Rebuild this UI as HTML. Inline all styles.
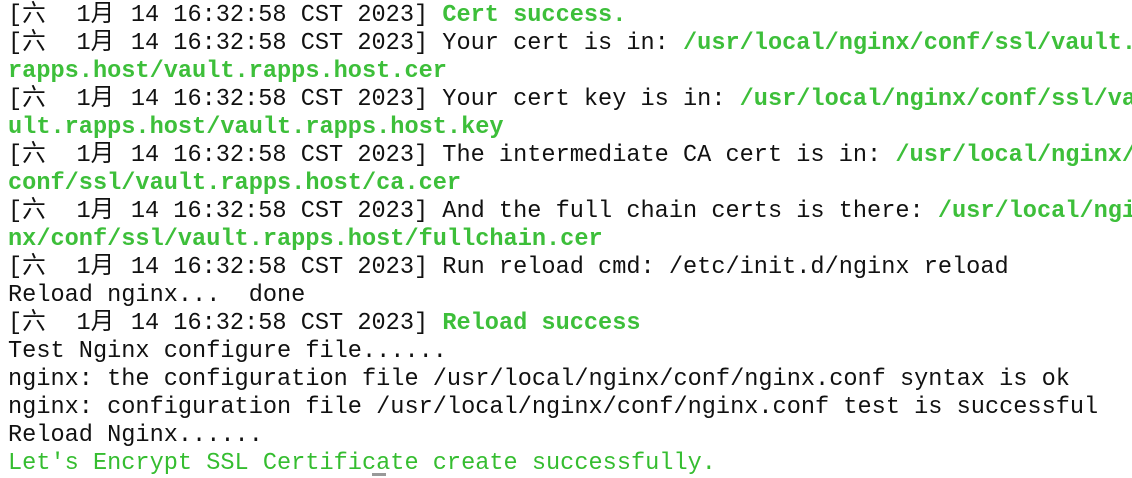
<!DOCTYPE html>
<html><head><meta charset="utf-8"><style>
html,body{margin:0;padding:0;background:#fff;width:1132px;height:478px;overflow:hidden}
.t{position:absolute;left:8px;top:2px;font-family:"Liberation Mono","Noto Sans CJK SC",monospace;font-size:23.6px;line-height:28px;color:#111;width:1200px}
.l{height:28px;white-space:pre}
.c{display:inline-block;width:26px;text-align:left}
.g{color:#3dbf3a;font-weight:bold}
.h{color:#35bd30}
.cur{position:absolute;left:372px;top:473px;width:14px;height:3px;background:#999}
</style></head><body>
<div class="t"><div class="l">[<span class="c">六</span>  1<span class="c">月</span> 14 16:32:58 CST 2023] <span class="g">Cert success.</span></div><div class="l">[<span class="c">六</span>  1<span class="c">月</span> 14 16:32:58 CST 2023] Your cert is in: <span class="g">/usr/local/nginx/conf/ssl/vault.</span></div><div class="l"><span class="g">rapps.host/vault.rapps.host.cer</span></div><div class="l">[<span class="c">六</span>  1<span class="c">月</span> 14 16:32:58 CST 2023] Your cert key is in: <span class="g">/usr/local/nginx/conf/ssl/va</span></div><div class="l"><span class="g">ult.rapps.host/vault.rapps.host.key</span></div><div class="l">[<span class="c">六</span>  1<span class="c">月</span> 14 16:32:58 CST 2023] The intermediate CA cert is in: <span class="g">/usr/local/nginx/</span></div><div class="l"><span class="g">conf/ssl/vault.rapps.host/ca.cer</span></div><div class="l">[<span class="c">六</span>  1<span class="c">月</span> 14 16:32:58 CST 2023] And the full chain certs is there: <span class="g">/usr/local/ngi</span></div><div class="l"><span class="g">nx/conf/ssl/vault.rapps.host/fullchain.cer</span></div><div class="l">[<span class="c">六</span>  1<span class="c">月</span> 14 16:32:58 CST 2023] Run reload cmd: /etc/init.d/nginx reload</div><div class="l">Reload nginx...  done</div><div class="l">[<span class="c">六</span>  1<span class="c">月</span> 14 16:32:58 CST 2023] <span class="g">Reload success</span></div><div class="l">Test Nginx configure file......</div><div class="l">nginx: the configuration file /usr/local/nginx/conf/nginx.conf syntax is ok</div><div class="l">nginx: configuration file /usr/local/nginx/conf/nginx.conf test is successful</div><div class="l">Reload Nginx......</div><div class="l h">Let's Encrypt SSL Certificate create successfully.</div></div>
<div class="cur"></div>
</body></html>
